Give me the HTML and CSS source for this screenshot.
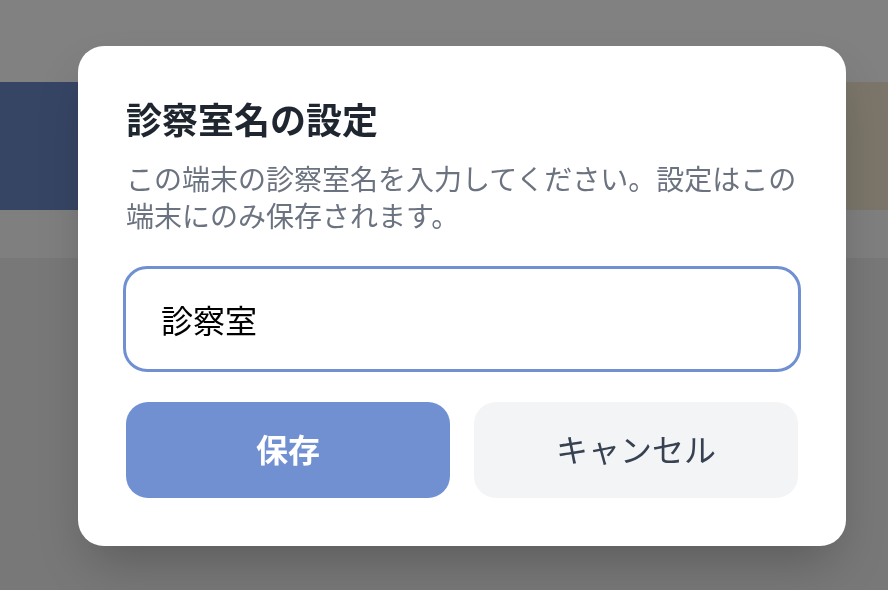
FILE: index.html
```html
<!DOCTYPE html>
<html lang="ja">
<head>
<meta charset="utf-8">
<title>診察室名の設定</title>
<link rel="stylesheet" href="styles.css">
</head>
<body>
<div class="page">
  <div class="page-top"></div>
  <div class="band">
    <div class="band-left"></div>
    <div class="band-right"></div>
  </div>
  <div class="page-sub"></div>
  <div class="page-rest"></div>
</div>
<div class="overlay">
  <div class="modal">
    <h2 class="modal-title">診察室名の設定</h2>
    <p class="modal-desc">この端末の診察室名を入力してください。設定はこの<br>端末にのみ保存されます。</p>
    <input class="room-input" type="text" value="診察室">
    <div class="actions">
      <button class="btn btn-save">保存</button>
      <button class="btn btn-cancel">キャンセル</button>
    </div>
  </div>
</div>
</body>
</html>
```
FILE: styles.css
```css
* { box-sizing: border-box; }
html, body { margin: 0; padding: 0; }
body {
  width: 888px;
  height: 590px;
  overflow: hidden;
  font-family: "Noto Sans CJK JP", "Noto Sans", sans-serif;
  background: #787878;
}
.page {
  display: flex;
  flex-direction: column;
  height: 590px;
}
.page-top { height: 82px; background: #818181; }
.band { height: 128px; display: flex; }
.band-left { flex: 1; background: #374565; }
.band-right { flex: 1; background: #7b7669; }
.page-sub { height: 48px; background: #7f7f7f; }
.page-rest { flex: 1; background: #787878; }

.overlay {
  position: fixed;
  inset: 0;
  display: flex;
  align-items: center;
  justify-content: center;
  padding: 2px 42px 0 78px;
}
.modal {
  width: 768px;
  height: 500px;
  background: #ffffff;
  border-radius: 26px;
  padding: 48px;
  display: flex;
  flex-direction: column;
  box-shadow: 0 25px 50px -12px rgba(0, 0, 0, 0.25);
}
.modal-title {
  margin: 0;
  font-size: 36px;
  line-height: 48px;
  font-weight: 700;
  color: #1f2630;
}
.modal-desc {
  margin: 18px 0 0;
  font-size: 28px;
  line-height: 37px;
  color: #6b7280;
  white-space: nowrap;
}
.room-input {
  margin-top: 35px;
  height: 100px;
  width: 100%;
  border: none;
  outline: 3px solid #7090d2;
  border-radius: 21px;
  padding: 0 35px;
  font-family: inherit;
  font-size: 32px;
  color: #000000;
  background: #ffffff;
}
.actions {
  margin-top: 33px;
  display: grid;
  grid-template-columns: 1fr 1fr;
  gap: 24px;
}
.btn {
  height: 96px;
  border: none;
  border-radius: 22px;
  font-family: inherit;
  font-size: 32px;
  padding: 0 0 4px;
}
.btn-save {
  background: #7090d2;
  color: #ffffff;
  font-weight: 700;
}
.btn-cancel {
  background: #f3f4f6;
  color: #374151;
  font-weight: 400;
}
```
